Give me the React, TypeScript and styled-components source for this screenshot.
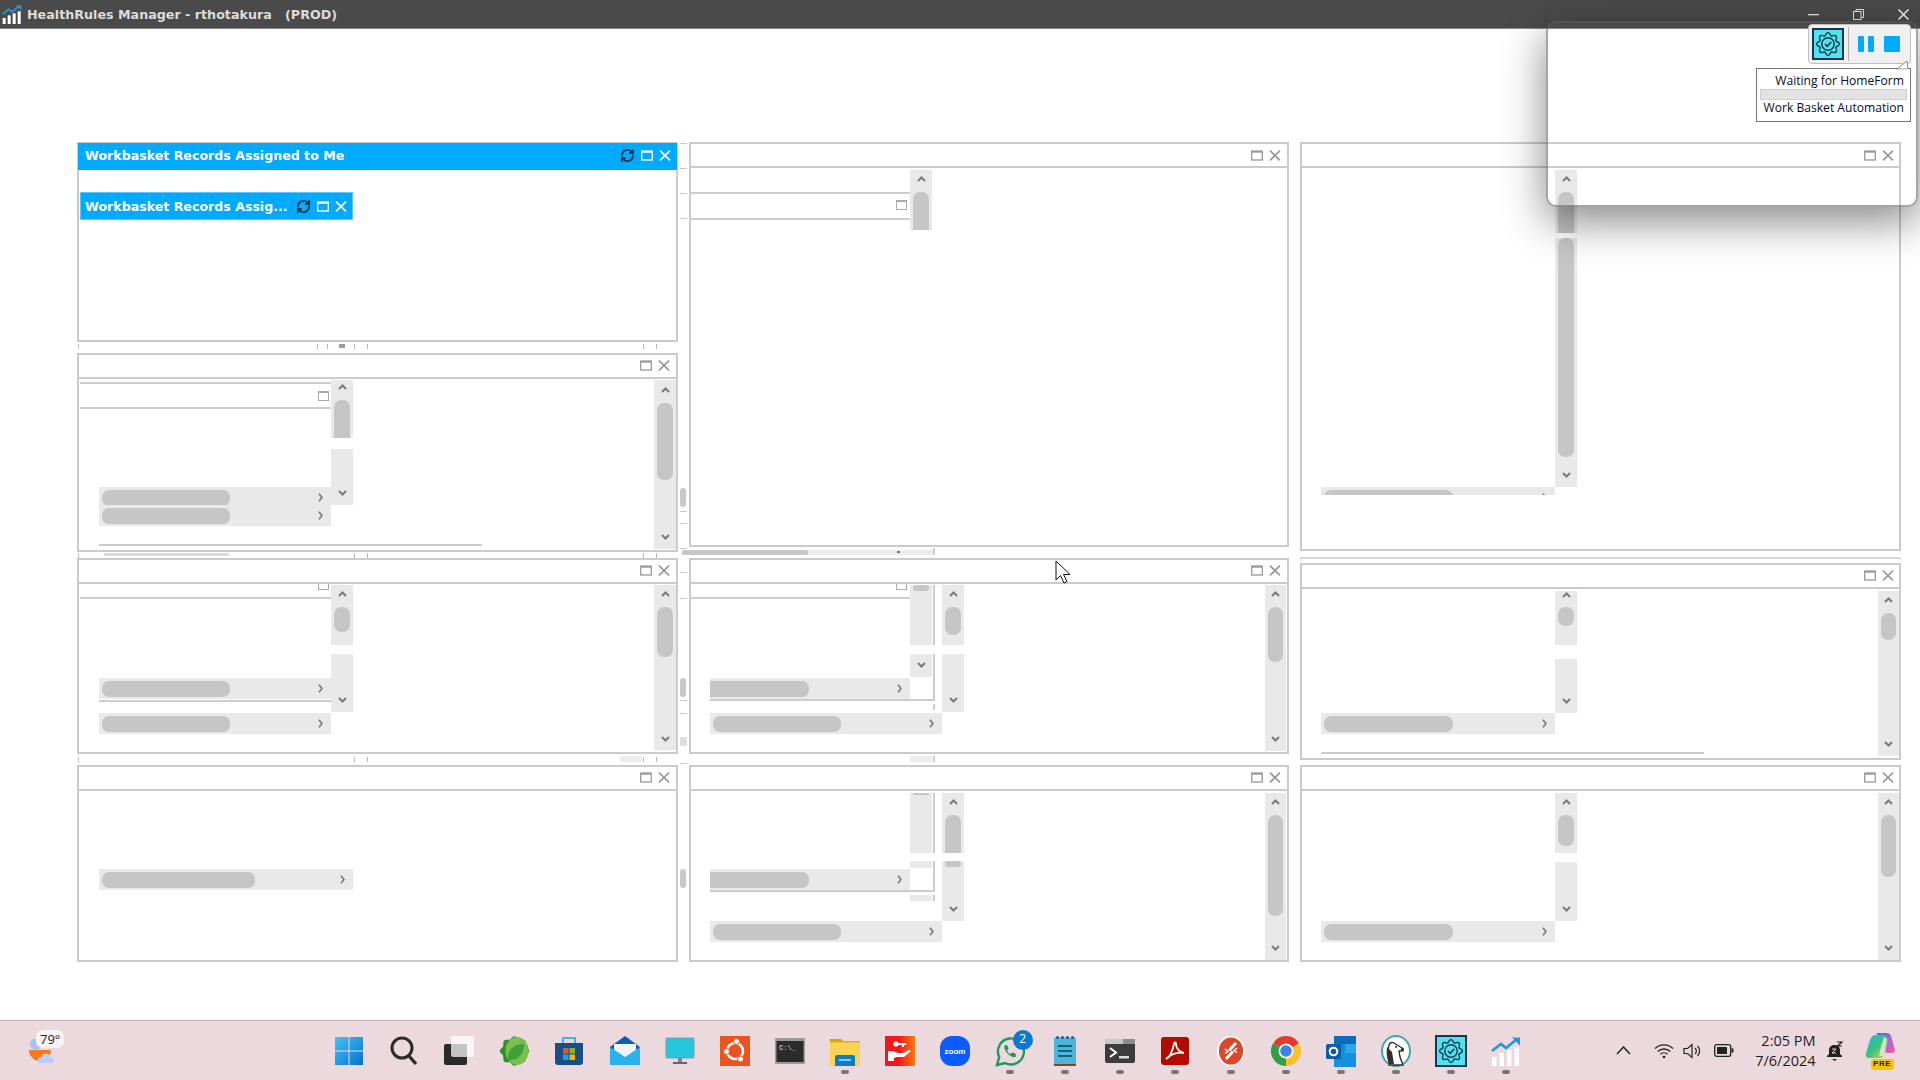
import { ReactNode } from "react";
import styled, { createGlobalStyle } from "styled-components";
import { RefreshCw } from "lucide-react";

const GlobalStyle = createGlobalStyle`
    html, body {
        margin: 0;
        height: 100%;
        overflow: hidden;
        background: #fff;
        font-family: "Open Sans", "Liberation Sans", sans-serif;
    }
`;

const Screen = styled.div`
    position: relative;
    display: flex;
    flex-direction: column;
    width: 1920px;
    height: 1080px;
    overflow: hidden;
    background: #fff;
`;

/* title bar */
const TitleBar = styled.div`
    display: flex;
    align-items: center;
    flex: 0 0 29px;
    box-sizing: border-box;
    padding: 0 11px 0 2px;
    gap: 5px;
    background: #4a4a4a;
    border-bottom: 1px solid #8a8a8a;
`;

const AppTitle = styled.span`
    flex: 1;
    padding-top: 1px;
    color: #dcdcdc;
    font: 700 12.7px "DejaVu Sans", sans-serif;
    white-space: pre;
`;

const WinControls = styled.div`
    display: flex;
    align-items: center;
    gap: 34px;
    margin-top: 1px;
`;

/* MDI area */
const Desktop = styled.div`
    flex: 1;
    display: flex;
    gap: 11px;
    padding: 113px 0 0 77px;
`;

const Column = styled.div`
    display: flex;
    flex-direction: column;
`;

const Win = styled.div<{ $w: number; $h: number; $mt: number }>`
    position: relative;
    box-sizing: border-box;
    width: ${(p) => p.$w}px;
    height: ${(p) => p.$h}px;
    margin-top: ${(p) => p.$mt}px;
    border: 2px solid #cbcbcb;
`;

const WinHeader = styled.div<{ $active?: boolean; $h: number; $low?: boolean; $pr: number }>`
    display: flex;
    align-items: center;
    justify-content: space-between;
    box-sizing: border-box;
    height: ${(p) => p.$h}px;
    padding: ${(p) => (p.$low ? 2 : 0)}px ${(p) => p.$pr}px 2px 7px;
    background: ${(p) => (p.$active ? "#00aaff" : "#fff")};
    border-bottom: ${(p) => (p.$active ? "none" : "2px solid #cbcbcb")};
    margin: ${(p) => (p.$active ? "-1px -1px 0" : "0")};
`;

const WinTitle = styled.span`
    color: #fff;
    font: 700 12.6px "DejaVu Sans", sans-serif;
    white-space: nowrap;
`;

const HeaderIcons = styled.div`
    display: flex;
    align-items: center;
    gap: 6px;
`;

const MiniTile = styled.div`
    position: absolute;
    left: 1px;
    top: 48px;
    display: flex;
    align-items: center;
    justify-content: space-between;
    box-sizing: border-box;
    width: 273px;
    height: 28px;
    padding: 0 5px 0 4px;
    background: #00aaff;
    border: 1px solid #5cc8ff;
`;

/* ghost scrollbars left behind inside the tiles */
const VTrack = styled.div<{ $x: number; $y: number; $h: number; $w: number }>`
    position: absolute;
    left: ${(p) => p.$x}px;
    top: ${(p) => p.$y}px;
    width: ${(p) => p.$w}px;
    height: ${(p) => p.$h}px;
    background: #e9e9e9;
`;

const VThumb = styled.div<{ $y: number; $h: number; $flat?: boolean }>`
    position: absolute;
    left: 3px;
    right: 3px;
    top: ${(p) => p.$y}px;
    height: ${(p) => p.$h}px;
    background: #c6c6c6;
    border-radius: ${(p) => (p.$flat ? "7px 7px 0 0" : "7px")};
`;

const ArrowSlot = styled.div<{ $y: number }>`
    position: absolute;
    left: 0;
    right: 0;
    top: ${(p) => p.$y}px;
    display: flex;
    justify-content: center;
`;

const HTrack = styled.div<{ $x: number; $y: number; $w: number; $h: number }>`
    position: absolute;
    left: ${(p) => p.$x}px;
    top: ${(p) => p.$y}px;
    width: ${(p) => p.$w}px;
    height: ${(p) => p.$h}px;
    overflow: hidden;
    background: #e9e9e9;
    display: flex;
    align-items: flex-start;
    justify-content: flex-end;
    padding: 6px 8px 0 0;
    box-sizing: border-box;
`;

const HThumb = styled.div<{ $w: number; $cut?: boolean }>`
    position: absolute;
    left: ${(p) => (p.$cut ? -10 : 3)}px;
    top: 3px;
    height: 16px;
    width: ${(p) => p.$w}px;
    background: #c6c6c6;
    border-radius: 7px;
`;

const HLine = styled.div<{ $x: number; $y: number; $w: number; $c?: string }>`
    position: absolute;
    left: ${(p) => p.$x}px;
    top: ${(p) => p.$y}px;
    width: ${(p) => p.$w}px;
    height: 2px;
    background: ${(p) => p.$c || "#cdcdcd"};
`;

const VLine = styled.div<{ $x: number; $y: number; $h: number }>`
    position: absolute;
    left: ${(p) => p.$x}px;
    top: ${(p) => p.$y}px;
    width: 2px;
    height: ${(p) => p.$h}px;
    background: #cdcdcd;
`;

const InnerBox = styled.div<{ $x: number; $y: number; $h: number; $open?: boolean }>`
    position: absolute;
    left: ${(p) => p.$x}px;
    top: ${(p) => p.$y}px;
    width: 11px;
    height: ${(p) => p.$h}px;
    box-sizing: border-box;
    border: 1px solid #aaa;
    border-top: ${(p) => (p.$open ? "none" : "2px solid #aaa")};
`;

/* marks in the gutters */
const Mark = styled.div<{ $x: number; $y: number; $w: number; $h: number; $c: string; $r?: number }>`
    position: absolute;
    left: ${(p) => p.$x}px;
    top: ${(p) => p.$y}px;
    width: ${(p) => p.$w}px;
    height: ${(p) => p.$h}px;
    background: ${(p) => p.$c};
    border-radius: ${(p) => p.$r || 0}px;
`;

const CursorWrap = styled.div`
    position: absolute;
    left: 1055px;
    top: 560px;
    line-height: 0;
`;

/* floating automation popup */
const Popup = styled.div`
    position: absolute;
    left: 1546px;
    top: 21px;
    width: 372px;
    height: 186px;
    box-sizing: border-box;
    border: 2px solid rgba(90, 90, 90, 0.55);
    border-radius: 10px;
    box-shadow: 0 14px 44px rgba(0, 0, 0, 0.48);
`;

const ToolStrip = styled.div`
    position: absolute;
    right: 5px;
    top: 1px;
    display: flex;
    align-items: center;
    box-sizing: border-box;
    width: 103px;
    height: 40px;
    padding: 0 10px 0 3px;
    background: #f0f0f0;
    border: 1px solid #c0c0c0;
    border-radius: 4px;
`;

const CogTile = styled.div`
    display: flex;
    align-items: center;
    justify-content: center;
    flex: none;
    box-sizing: border-box;
    width: 32px;
    height: 32px;
    background: #4fe3ee;
    border: 2px solid #17364f;
`;

const StripSep = styled.div`
    width: 1px;
    height: 34px;
    margin: 0 9px 0 4px;
    background: #b0b0b0;
`;

const PauseBar = styled.div`
    width: 6px;
    height: 16px;
    margin-right: 4px;
    background: #00aaff;
    border-radius: 1px;
`;

const StopBlock = styled.div`
    width: 16px;
    height: 16px;
    margin-left: 6px;
    background: #00aaff;
    border-radius: 1px;
`;

const StatusBox = styled.div`
    position: absolute;
    right: 5px;
    top: 45px;
    box-sizing: border-box;
    width: 155px;
    height: 54px;
    padding: 3px 6px 0 3px;
    background: #fff;
    border: 1px solid #777;
    text-align: right;
    color: #0a0a2a;
    font: 12.1px "Open Sans", sans-serif;
    line-height: 18px;
`;

const StatusBar = styled.div`
    box-sizing: border-box;
    width: 147px;
    height: 11px;
    margin: -1px 0;
    background: #e3e3e3;
    border: 1px solid #cfcfcf;
`;

const StripTail = styled.svg`
    position: absolute;
    right: 6px;
    top: 38px;
`;

/* taskbar */
const Taskbar = styled.div`
    display: flex;
    align-items: center;
    flex: 0 0 60px;
    box-sizing: border-box;
    background: #ecd9dd;
    border-top: 1px solid #c4b4b8;
`;

const Weather = styled.div`
    position: relative;
    flex: 0 0 321.5px;
    height: 100%;
`;

const WeatherBubble = styled.span`
    position: absolute;
    left: 36px;
    top: 9px;
    padding: 0 4px;
    height: 18px;
    line-height: 18px;
    background: #fbf4f5;
    border-radius: 7px;
    color: #222;
    font: 13px "Open Sans", sans-serif;
`;

const WeatherIcon = styled.svg`
    position: absolute;
    left: 26px;
    top: 18px;
`;

const AppRow = styled.div`
    display: flex;
    align-items: center;
    height: 100%;
`;

const AppCell = styled.div`
    position: relative;
    display: flex;
    align-items: center;
    justify-content: center;
    width: 55.1px;
    height: 100%;
`;

const RunDot = styled.div`
    position: absolute;
    left: 50%;
    bottom: 6px;
    width: 8px;
    height: 4px;
    margin-left: -4px;
    background: #777;
    border-radius: 2px;
`;

const Badge = styled.span`
    position: absolute;
    left: 30px;
    top: 9px;
    width: 20px;
    height: 20px;
    line-height: 20px;
    text-align: center;
    background: #0a7ad1;
    border-radius: 50%;
    color: #fff;
    font: 12px "Open Sans", sans-serif;
`;

const Tray = styled.div`
    display: flex;
    align-items: center;
    margin-left: 80px;
    height: 100%;
`;

const TrayIcon = styled.div<{ $w: number; $ml?: number }>`
    display: flex;
    justify-content: center;
    width: ${(p) => p.$w}px;
    margin-left: ${(p) => p.$ml || 0}px;
`;

const Clock = styled.div`
    width: 80px;
    text-align: right;
    color: #1d1d1d;
    font: 14.5px "Open Sans", sans-serif;
    line-height: 20px;
`;

const CopilotWrap = styled.div`
    position: relative;
    width: 34px;
    height: 38px;
    margin-left: 21px;
`;

const PreTag = styled.span`
    position: absolute;
    left: 6px;
    bottom: 0;
    width: 23px;
    height: 11px;
    line-height: 11px;
    text-align: center;
    background: #f7c600;
    border-radius: 3px;
    color: #222;
    font: 700 8px "Liberation Sans", sans-serif;
    letter-spacing: 0.5px;
`;

const SmallCodeText = styled.text`
    font: 700 7px "Liberation Mono", monospace;
`;

const ZoomLabel = styled.text`
    font: 700 8px "Liberation Sans", sans-serif;
`;

/* small drawn glyphs */
const MaxIcon = ({ color = "#999" }: { color?: string }) => (
    <svg width="12" height="11" viewBox="0 0 12 11">
        <rect x="0.7" y="1.2" width="10.6" height="8.8" fill="none" stroke={color} strokeWidth="1.3" />
        <rect x="0.7" y="0.7" width="10.6" height="2" fill={color} />
    </svg>
);

const CloseIcon = ({ color = "#999" }: { color?: string }) => (
    <svg width="12" height="11" viewBox="0 0 12 11">
        <path d="M1 0.7L11 10.3M11 0.7L1 10.3" stroke={color} strokeWidth="1.7" fill="none" />
    </svg>
);

const ArrowUp = () => (
    <svg width="9" height="6" viewBox="0 0 9 6">
        <path d="M1 5L4.5 1.5L8 5" stroke="#7a7a7a" strokeWidth="2" fill="none" />
    </svg>
);

const ArrowDown = () => (
    <svg width="9" height="6" viewBox="0 0 9 6">
        <path d="M1 1L4.5 4.5L8 1" stroke="#7a7a7a" strokeWidth="2" fill="none" />
    </svg>
);

const ArrowRight = () => (
    <svg width="5" height="9" viewBox="0 0 5 9">
        <path d="M1 0.8L4 4.5L1 8.2" stroke="#7a7a7a" strokeWidth="1.7" fill="none" />
    </svg>
);

const gearPath = (cx: number, cy: number, r: number, amp: number) => {
    const pts: string[] = [];
    for (let i = 0; i < 96; i++) {
        const t = (i / 96) * Math.PI * 2;
        const rad = r + amp * Math.cos(t * 8);
        pts.push(`${(cx + rad * Math.sin(t)).toFixed(2)} ${(cy - rad * Math.cos(t)).toFixed(2)}`);
    }
    return `M${pts.join("L")}Z`;
};

const GearCheck = ({ size }: { size: number }) => (
    <svg width={size} height={size} viewBox="0 0 30 30" fill="none" stroke="#17364f" strokeWidth="1.6">
        <path d={gearPath(15, 15, 11.6, 1.6)} />
        <circle cx="15" cy="15" r="7.2" />
        <path d="M11.6 15l2.5 2.6 4.6-5" strokeWidth="1.8" />
    </svg>
);

const ChartIcon = ({ size }: { size: number }) => (
    <svg width={size} height={size} viewBox="0 0 30 30">
        <path d="M1 15L10 8L15 12L26 3" stroke="#1f9ad6" strokeWidth="2.6" fill="none" />
        <path d="M21 1.5H29V9.5Z" fill="#1f9ad6" />
        <rect x="1" y="21" width="4.5" height="9" fill="#fff" />
        <rect x="8.5" y="17" width="4.5" height="13" fill="#fff" />
        <rect x="16" y="14" width="4.5" height="16" fill="#fff" />
        <rect x="23.5" y="11" width="4.5" height="19" fill="#fff" />
    </svg>
);

/* tile data, in screen coordinates */
type VBar = {
    x: number;
    top: number;
    bottom: number;
    thumb?: [number, number];
    up?: number;
    down?: number;
    flat?: boolean;
};
type HBar = { left: number; right: number; top: number; bottom: number; thumbEnd: number; cut?: boolean };
type Line = { x: number; y: number; w: number };
type VL = { x: number; y: number; h: number };
type Tile = {
    w: number;
    x: number;
    y: number;
    h: number;
    mt: number;
    v?: VBar[];
    hb?: HBar[];
    lines?: Line[];
    vlines?: VL[];
    box?: { x: number; y: number; h: number; open?: boolean };
    active?: boolean;
};

const columns: Tile[][] = [
    [
        { x: 77, y: 142, w: 601, h: 200, mt: 0, active: true },
        {
            x: 77,
            y: 353,
            w: 601,
            h: 199,
            mt: 11,
            v: [
                { x: 654, top: 380, bottom: 549, thumb: [403, 480], up: 387, down: 534 },
                { x: 331, top: 380, bottom: 438, thumb: [400, 438], up: 384, flat: true },
                { x: 331, top: 449, bottom: 505, down: 490 },
            ],
            hb: [
                { left: 99, right: 331, top: 487, bottom: 505, thumbEnd: 230 },
                { left: 99, right: 331, top: 505, bottom: 526, thumbEnd: 230 },
            ],
            lines: [
                { x: 80, y: 382, w: 251 },
                { x: 80, y: 407, w: 251 },
                { x: 99, y: 544, w: 383 },
            ],
            box: { x: 318, y: 391, h: 10 },
        },
        {
            x: 77,
            y: 558,
            w: 601,
            h: 196,
            mt: 6,
            v: [
                { x: 654, top: 585, bottom: 750, thumb: [607, 657], up: 591, down: 736 },
                { x: 331, top: 585, bottom: 645, thumb: [607, 632], up: 591 },
                { x: 331, top: 654, bottom: 712, down: 697 },
            ],
            hb: [
                { left: 99, right: 331, top: 678, bottom: 699, thumbEnd: 230 },
                { left: 99, right: 331, top: 713, bottom: 734, thumbEnd: 230 },
            ],
            lines: [
                { x: 80, y: 597, w: 251 },
                { x: 99, y: 700, w: 232 },
            ],
            box: { x: 318, y: 584, h: 6, open: true },
        },
        {
            x: 77,
            y: 765,
            w: 601,
            h: 197,
            mt: 11,
            hb: [{ left: 99, right: 353, top: 869, bottom: 890, thumbEnd: 255 }],
        },
    ],
    [
        {
            x: 689,
            y: 142,
            w: 600,
            h: 405,
            mt: 0,
            v: [{ x: 910, top: 170, bottom: 230, thumb: [192, 230], up: 176, flat: true }],
            lines: [
                { x: 691, y: 192, w: 219 },
                { x: 691, y: 218, w: 219 },
            ],
            box: { x: 896, y: 200, h: 10 },
        },
        {
            x: 689,
            y: 558,
            w: 600,
            h: 196,
            mt: 11,
            v: [
                { x: 1265, top: 585, bottom: 751, thumb: [607, 662], up: 591, down: 736 },
                { x: 942, top: 585, bottom: 645, thumb: [607, 635], up: 591 },
                { x: 942, top: 654, bottom: 712, down: 697 },
                { x: 910, top: 585, bottom: 645, thumb: [579, 591] },
                { x: 910, top: 654, bottom: 677, down: 662 },
            ],
            hb: [
                { left: 710, right: 910, top: 678, bottom: 699, thumbEnd: 809, cut: true },
                { left: 710, right: 942, top: 713, bottom: 734, thumbEnd: 841 },
            ],
            lines: [
                { x: 691, y: 597, w: 219 },
                { x: 710, y: 699, w: 225 },
            ],
            vlines: [
                { x: 933, y: 585, h: 60 },
                { x: 933, y: 654, h: 46 },
                { x: 933, y: 704, h: 6 },
            ],
            box: { x: 896, y: 584, h: 6, open: true },
        },
        {
            x: 689,
            y: 765,
            w: 600,
            h: 197,
            mt: 11,
            v: [
                { x: 1265, top: 793, bottom: 960, thumb: [815, 916], up: 799, down: 945 },
                { x: 942, top: 793, bottom: 853, thumb: [815, 853], up: 799, flat: true },
                { x: 942, top: 861, bottom: 921, thumb: [855, 867], down: 906 },
                { x: 910, top: 793, bottom: 853, thumb: [787, 795] },
                { x: 910, top: 861, bottom: 868 },
                { x: 910, top: 895, bottom: 901 },
            ],
            hb: [
                { left: 710, right: 910, top: 869, bottom: 890, thumbEnd: 809, cut: true },
                { left: 710, right: 942, top: 921, bottom: 942, thumbEnd: 841 },
            ],
            lines: [{ x: 710, y: 890, w: 225 }],
            vlines: [
                { x: 933, y: 793, h: 60 },
                { x: 933, y: 861, h: 30 },
                { x: 933, y: 895, h: 6 },
            ],
        },
    ],
    [
        {
            x: 1300,
            y: 142,
            w: 601,
            h: 409,
            mt: 0,
            v: [
                { x: 1555, top: 170, bottom: 233, thumb: [192, 233], up: 176, flat: true },
                { x: 1555, top: 238, bottom: 487, thumb: [238, 457], down: 472 },
            ],
            hb: [{ left: 1321, right: 1555, top: 487, bottom: 495, thumbEnd: 1453 }],
        },
        {
            x: 1300,
            y: 563,
            w: 601,
            h: 197,
            mt: 12,
            v: [
                { x: 1878, top: 591, bottom: 756, thumb: [613, 640], up: 597, down: 741 },
                { x: 1555, top: 591, bottom: 645, thumb: [607, 626], up: 592 },
                { x: 1555, top: 659, bottom: 713, down: 698 },
            ],
            hb: [{ left: 1321, right: 1555, top: 713, bottom: 734, thumbEnd: 1453 }],
            lines: [{ x: 1321, y: 752, w: 383 }],
        },
        {
            x: 1300,
            y: 765,
            w: 601,
            h: 197,
            mt: 5,
            v: [
                { x: 1878, top: 793, bottom: 960, thumb: [815, 877], up: 799, down: 945 },
                { x: 1555, top: 793, bottom: 853, thumb: [815, 846], up: 799 },
                { x: 1555, top: 862, bottom: 921, down: 906 },
            ],
            hb: [{ left: 1321, right: 1555, top: 921, bottom: 942, thumbEnd: 1453 }],
        },
    ],
];

const tickXs = [354, 367, 643, 656];
const gutterDashes = [143, 168, 193, 218, 511, 523, 548, 572, 598, 700, 713, 763];
const gutterBlobs = [488, 678, 869];

const TileView = ({ tile }: { tile: Tile }) => {
    const ox = tile.x + 2;
    const oy = tile.y + 2;
    return (
        <Win $w={tile.w} $h={tile.h} $mt={tile.mt}>
            <WinHeader
                $active={tile.active}
                $h={tile.active ? 27 : 24}
                $low={!tile.active && tile.y === 142}
                $pr={tile.x === 1300 ? 5 : 6}
            >
                {tile.active ? <WinTitle>Workbasket Records Assigned to Me</WinTitle> : <span />}
                <HeaderIcons>
                    {tile.active && <RefreshCw size={15} color="#24384a" strokeWidth={3} />}
                    <MaxIcon color={tile.active ? "#fff" : "#999"} />
                    <CloseIcon color={tile.active ? "#fff" : "#999"} />
                </HeaderIcons>
            </WinHeader>
            {tile.active && (
                <MiniTile>
                    <WinTitle>Workbasket Records Assig...</WinTitle>
                    <HeaderIcons>
                        <RefreshCw size={15} color="#24384a" strokeWidth={3} />
                        <MaxIcon color="#fff" />
                        <CloseIcon color="#fff" />
                    </HeaderIcons>
                </MiniTile>
            )}
            {tile.lines?.map((l) => (
                <HLine key={`${l.x}-${l.y}`} $x={l.x - ox} $y={l.y - oy} $w={l.w} />
            ))}
            {tile.vlines?.map((l) => (
                <VLine key={`${l.x}-${l.y}`} $x={l.x - ox} $y={l.y - oy} $h={l.h} />
            ))}
            {tile.box && (
                <InnerBox
                    $x={tile.box.x - ox}
                    $y={tile.box.y - oy}
                    $h={tile.box.h}
                    $open={tile.box.open}
                />
            )}
            {tile.hb?.map((b) => (
                <HTrack
                    key={`${b.left}-${b.top}`}
                    $x={b.left - ox}
                    $y={b.top - oy}
                    $w={b.right - b.left}
                    $h={b.bottom - b.top}
                >
                    <HThumb $w={b.thumbEnd - b.left + (b.cut ? 10 : -3)} $cut={b.cut} />
                    <ArrowRight />
                </HTrack>
            ))}
            {tile.v?.map((b) => (
                <VTrack
                    key={`${b.x}-${b.top}`}
                    $x={b.x - ox}
                    $y={b.top - oy}
                    $w={b.x > 1000 && b.x !== 1555 ? 21 : 22}
                    $h={b.bottom - b.top}
                >
                    {b.thumb && (
                        <VThumb
                            $y={Math.max(b.thumb[0] - b.top, 0)}
                            $h={b.thumb[1] - Math.max(b.thumb[0], b.top)}
                            $flat={b.flat}
                        />
                    )}
                    {b.up !== undefined && (
                        <ArrowSlot $y={b.up - b.top}>
                            <ArrowUp />
                        </ArrowSlot>
                    )}
                    {b.down !== undefined && (
                        <ArrowSlot $y={b.down - b.top}>
                            <ArrowDown />
                        </ArrowSlot>
                    )}
                </VTrack>
            ))}
        </Win>
    );
};

/* taskbar icons */
const WindowsIcon = () => (
    <svg width="30" height="30" viewBox="0 0 30 30">
        <defs>
            <linearGradient id="wn" x1="0" y1="0" x2="1" y2="1">
                <stop offset="0" stopColor="#45c3f5" />
                <stop offset="1" stopColor="#0670cf" />
            </linearGradient>
        </defs>
        <path d="M1 1h13.5v13.5H1zM15.5 1H29v13.5H15.5zM1 15.5h13.5V29H1zM15.5 15.5H29V29H15.5z" fill="url(#wn)" />
    </svg>
);

const SearchIcon = () => (
    <svg width="30" height="30" viewBox="0 0 30 30" fill="none" stroke="#2b2b2b" strokeWidth="3">
        <circle cx="13" cy="12" r="10" />
        <path d="M20 20l7 8" strokeWidth="3.4" />
    </svg>
);

const TaskViewIcon = () => (
    <svg width="30" height="30" viewBox="0 0 30 30">
        <rect x="0" y="8" width="23" height="21" rx="2" fill="#2a2a2a" />
        <rect x="7" y="0" width="23" height="21" rx="2" fill="#fff" fillOpacity="0.72" />
    </svg>
);

const SpringIcon = () => (
    <svg width="30" height="30" viewBox="0 0 30 30">
        <path d={gearPath(15.5, 15, 13.5, 1.2)} fill="#2f8f2f" />
        <ellipse cx="18" cy="15" rx="11.5" ry="14" fill="#79bf4c" />
        <path d="M9 24C8 14 15 8 25 8C25 18 19 25 9 24Z" fill="#3f9f38" />
    </svg>
);

const StoreIcon = () => (
    <svg width="30" height="30" viewBox="0 0 30 30">
        <path d="M9 7V2h12v5" fill="none" stroke="#37b6f0" strokeWidth="2" />
        <path d="M1 7h28v19a3 3 0 0 1-3 3H4a3 3 0 0 1-3-3z" fill="#174f86" />
        <rect x="9" y="12" width="5.5" height="5.5" fill="#e8542a" />
        <rect x="15.5" y="12" width="5.5" height="5.5" fill="#7eb62c" />
        <rect x="9" y="18.5" width="5.5" height="5.5" fill="#1ba1e8" />
        <rect x="15.5" y="18.5" width="5.5" height="5.5" fill="#f7b500" />
    </svg>
);

const MailIcon = () => (
    <svg width="30" height="30" viewBox="0 0 30 30">
        <path d="M0 11L15 0L30 11V29H0Z" fill="#0f5fae" />
        <path d="M4 8h22v9l-11 7-11-7z" fill="#f2f2f2" />
        <path d="M0 11L15 21L30 11V29H0Z" fill="#28b3ec" />
    </svg>
);

const MonitorIcon = () => (
    <svg width="30" height="30" viewBox="0 0 30 30">
        <rect x="1" y="2" width="28" height="20" rx="1" fill="#24c6dc" stroke="#8a9aa8" />
        <rect x="13" y="22" width="4" height="4" fill="#7a8a96" />
        <rect x="8" y="26" width="14" height="2" fill="#5a6a76" />
    </svg>
);

const UbuntuIcon = () => (
    <svg width="30" height="30" viewBox="0 0 30 30">
        <rect width="30" height="30" fill="#e95420" />
        <circle cx="15" cy="15" r="8" fill="none" stroke="#fff" strokeWidth="2.6" />
        <circle cx="16.5" cy="5.5" r="3" fill="#fff" stroke="#e95420" />
        <circle cx="6.5" cy="15.5" r="3" fill="#fff" stroke="#e95420" />
        <circle cx="20.5" cy="23" r="3" fill="#fff" stroke="#e95420" />
    </svg>
);

const CmdIcon = () => (
    <svg width="30" height="26" viewBox="0 0 30 26">
        <rect width="30" height="26" rx="1" fill="#9a9a9a" />
        <rect x="1.5" y="3" width="27" height="21" fill="#2b2b2b" />
        <SmallCodeText x="4" y="12" fill="#bbb">
            C:\_
        </SmallCodeText>
    </svg>
);

const FolderIcon = () => (
    <svg width="30" height="30" viewBox="0 0 30 30">
        <path d="M0 3h11l3 3h16v4H0z" fill="#d9a00e" />
        <rect y="5" width="30" height="25" fill="#f7d453" />
        <rect y="5" width="30" height="1.4" fill="#e3a70f" />
        <path d="M5 21a2 2 0 0 1 2-2h16a2 2 0 0 1 2 2v9H5z" fill="#0e7cc4" />
        <rect x="9" y="23" width="12" height="2" fill="#7fd0f5" />
    </svg>
);

const HandIcon = () => (
    <svg width="30" height="30" viewBox="0 0 30 30">
        <defs>
            <linearGradient id="hd" x1="0" y1="0" x2="1" y2="0">
                <stop offset="0.45" stopColor="#f5161c" />
                <stop offset="1" stopColor="#fb7b08" />
            </linearGradient>
        </defs>
        <rect width="30" height="30" fill="url(#hd)" />
        <circle cx="11" cy="8" r="2.6" fill="#fff" />
        <path d="M12 7h9v2h-2v2h-2V9h-5z" fill="#fff" />
        <path d="M3 15h5l5 2h5l6-3 2 1-7 6H12l-3 1v3H3z" fill="#fff" />
    </svg>
);

const ZoomIcon = () => (
    <svg width="30" height="30" viewBox="0 0 30 30">
        <rect width="30" height="30" rx="12" fill="#0b5cff" />
        <ZoomLabel x="15" y="18" fill="#fff" textAnchor="middle">
            zoom
        </ZoomLabel>
    </svg>
);

const WhatsappIcon = () => (
    <svg width="30" height="32" viewBox="0 0 30 32">
        <path d="M2 30l2.2-8A13 13 0 1 1 10 28z" fill="none" stroke="#1c9a5c" strokeWidth="2.4" />
        <path
            d="M10 10c-1.5 2 0 6 3 9s6 4 8 2.5l-.5-3-3.500-1-1.500 1.500c-1.500-.5-3-2-3.500-3.500l1.500-1.500-1-3.500z"
            fill="#1c9a5c"
        />
    </svg>
);

const NotepadIcon = () => (
    <svg width="22" height="30" viewBox="0 0 22 30">
        <rect y="1.5" width="22" height="28.5" rx="1" fill="#4db6d8" />
        <rect y="28" width="22" height="2" fill="#7a4a1c" />
        <g fill="#17607e">
            <circle cx="3.5" cy="1.5" r="1.5" />
            <circle cx="8.5" cy="1.5" r="1.5" />
            <circle cx="13.5" cy="1.5" r="1.5" />
            <circle cx="18.5" cy="1.5" r="1.5" />
            <rect x="4" y="9" width="14" height="2" />
            <rect x="4" y="14" width="14" height="2" />
            <rect x="4" y="19" width="14" height="2" />
        </g>
    </svg>
);

const TerminalIcon = () => (
    <svg width="30" height="24" viewBox="0 0 30 24">
        <rect width="30" height="24" rx="2" fill="#3c3c3c" />
        <rect width="18" height="5" fill="#c8c8c8" />
        <rect x="18" width="12" height="5" fill="#8c8c8c" />
        <path d="M5 9l6 4.500-6 4.500" stroke="#fff" strokeWidth="2" fill="none" />
        <rect x="14" y="17" width="10" height="2.500" fill="#ddd" />
    </svg>
);

const AcrobatIcon = () => (
    <svg width="28" height="28" viewBox="0 0 28 28">
        <rect width="28" height="28" rx="3" fill="#b30b00" />
        <path
            d="M5 22c3-1 6-6 8-15 .5-2 2-2 2 0 0 4 3 8 8 9-6-1-12 0-18 6z"
            fill="none"
            stroke="#fff"
            strokeWidth="1.8"
        />
    </svg>
);

const RemoteIcon = () => (
    <svg width="28" height="30" viewBox="0 0 28 30">
        <ellipse cx="14" cy="15" rx="13" ry="14.5" fill="#d9482a" stroke="#fff" strokeWidth="1.8" />
        <path d="M19 7l-7 7.500M9 23l7-7.500" stroke="#fff" strokeWidth="2.8" fill="none" />
        <path d="M8 13l3 2.500-3 2M20 12l-3 2.500 3 2" stroke="#fff" strokeWidth="1.400" fill="none" />
    </svg>
);

const ChromeIcon = () => (
    <svg width="30" height="30" viewBox="0 0 30 30">
        <path d="M15 15L2 7.500A15 15 0 0 1 28 7.500Z" fill="#e33b2e" />
        <path d="M15 15L28 7.500A15 15 0 0 1 15 30Z" fill="#fbc02d" />
        <path d="M15 15L15 30A15 15 0 0 1 2 7.500Z" fill="#2f9e44" />
        <circle cx="15" cy="15" r="7.5" fill="#fff" />
        <circle cx="15" cy="15" r="5.8" fill="#3b82e6" />
    </svg>
);

const OutlookIcon = () => (
    <svg width="30" height="32" viewBox="0 0 30 32">
        <rect x="8" y="1" width="22" height="8" fill="#0f6cbd" />
        <rect x="8" y="9" width="11" height="9" fill="#0f8ad8" />
        <rect x="19" y="9" width="11" height="9" fill="#28a8ea" />
        <path d="M8 18h22v14H8z" fill="#1490df" />
        <rect x="0" y="9" width="15" height="15" rx="1.5" fill="#0a5ea8" />
        <circle cx="7.5" cy="16.5" r="3.8" fill="none" stroke="#fff" strokeWidth="2" />
    </svg>
);

const BeaverIcon = () => (
    <svg width="30" height="32" viewBox="0 0 30 32">
        <ellipse cx="15" cy="16" rx="14" ry="15" fill="#fff" stroke="#3aa9a9" strokeWidth="2" />
        <path d="M8 10c1-3 4-3 5-2l8 5c2 1 2 3 0 3l-3 0 1 6 3 8H8l1-11-2-4z" fill="#fff" stroke="#352f2b" strokeWidth="1.400" />
        <path d="M6 12c-1 6 0 12 2 17h5l-2-12z" fill="#352f2b" />
        <circle cx="15" cy="12" r="1" fill="#352f2b" />
        <circle cx="21" cy="14.500" r="1.200" fill="#352f2b" />
    </svg>
);

const AppCog = () => (
    <CogTile>
        <GearCheck size={26} />
    </CogTile>
);

const WeatherGlyph = () => (
    <WeatherIcon width="30" height="30" viewBox="0 0 30 30">
        <circle cx="10" cy="5" r="6" fill="#a9c0f2" />
        <path d="M3 11h22a11 11 0 0 1-22 0z" fill="#f47a1c" />
        <circle cx="20" cy="19" r="4.5" fill="#bccdf7" />
        <rect x="12" y="18" width="16" height="6" rx="3" fill="#bccdf7" />
    </WeatherIcon>
);

const CopilotIcon = () => (
    <svg width="32" height="30" viewBox="0 0 32 30">
        <defs>
            <linearGradient id="cpA" x1="0" y1="0" x2="1" y2="1">
                <stop offset="0" stopColor="#1fb8f0" />
                <stop offset="0.5" stopColor="#38c47a" />
                <stop offset="1" stopColor="#f0d040" />
            </linearGradient>
            <linearGradient id="cpB" x1="0" y1="0" x2="1" y2="1">
                <stop offset="0" stopColor="#2f6ff0" />
                <stop offset="0.5" stopColor="#b060e0" />
                <stop offset="1" stopColor="#f06090" />
            </linearGradient>
        </defs>
        <path d="M11 1h11c2 0 3 1 4 3l4 14c0 2-1 3-3 3h-6L15 5z" fill="url(#cpB)" />
        <path d="M9 3c-2 1-3 3-4 5L1 21c-1 3 1 5 3 5h11c2 0 3-1 4-3l3-10c1-3 2-9-3-10z" fill="url(#cpA)" />
        <path d="M16 15l3-10 3 2-3 17h-5z" fill="#f5e9ee" fillOpacity="0.75" />
    </svg>
);

const apps: { id: string; icon: ReactNode; running?: boolean; badge?: string }[] = [
    { id: "start", icon: <WindowsIcon /> },
    { id: "search", icon: <SearchIcon /> },
    { id: "taskview", icon: <TaskViewIcon /> },
    { id: "spring", icon: <SpringIcon /> },
    { id: "store", icon: <StoreIcon /> },
    { id: "mail", icon: <MailIcon /> },
    { id: "monitor", icon: <MonitorIcon /> },
    { id: "ubuntu", icon: <UbuntuIcon /> },
    { id: "cmd", icon: <CmdIcon /> },
    { id: "explorer", icon: <FolderIcon />, running: true },
    { id: "hand", icon: <HandIcon /> },
    { id: "zoom", icon: <ZoomIcon /> },
    { id: "whatsapp", icon: <WhatsappIcon />, running: true, badge: "2" },
    { id: "notepad", icon: <NotepadIcon />, running: true },
    { id: "terminal", icon: <TerminalIcon />, running: true },
    { id: "acrobat", icon: <AcrobatIcon />, running: true },
    { id: "remote", icon: <RemoteIcon />, running: true },
    { id: "chrome", icon: <ChromeIcon />, running: true },
    { id: "outlook", icon: <OutlookIcon />, running: true },
    { id: "beaver", icon: <BeaverIcon />, running: true },
    { id: "cog", icon: <AppCog />, running: true },
    { id: "chart", icon: <ChartIcon size={30} />, running: true },
];

const App = () => (
    <Screen>
        <GlobalStyle />
        <TitleBar>
            <ChartIcon size={20} />
            <AppTitle>HealthRules Manager - rthotakura{"   "}(PROD)</AppTitle>
            <WinControls>
                <svg width="11" height="11" viewBox="0 0 11 11">
                    <rect y="5" width="11" height="1.3" fill="#e6e6e6" />
                </svg>
                <svg width="11" height="11" viewBox="0 0 11 11" fill="none" stroke="#e6e6e6">
                    <rect x="0.5" y="2.5" width="7.5" height="8" />
                    <path d="M3 2.500V.5h7.500v8H8" />
                </svg>
                <svg width="11" height="11" viewBox="0 0 11 11">
                    <path d="M.5 .5L10.500 10.500M10.500 .5L.5 10.500" stroke="#f2f2f2" strokeWidth="1.500" />
                </svg>
            </WinControls>
        </TitleBar>

        <Desktop>
            {columns.map((col) => (
                <Column key={col[0].x}>
                    {col.map((tile) => (
                        <TileView key={tile.y} tile={tile} />
                    ))}
                </Column>
            ))}
        </Desktop>

        {/* paint left over between the tiles */}
        {[344, 553, 757].map((y) => (
            <Mark key={`l${y}`} $x={78} $y={y} $w={1} $h={5} $c="#c4c4c4" />
        ))}
        {[344, 553, 757].flatMap((y) =>
            tickXs.map((x) => <Mark key={`${x}-${y}`} $x={x} $y={y} $w={1} $h={5} $c="#b8b8b8" />)
        )}
        <Mark $x={317} $y={344} $w={1} $h={5} $c="#b8b8b8" />
        <Mark $x={327} $y={344} $w={1} $h={5} $c="#b8b8b8" />
        <Mark $x={339} $y={344} $w={6} $h={4} $c="#9c9c9c" />
        <Mark $x={104} $y={553} $w={125} $h={3} $c="#dcdcdc" />
        <Mark $x={620} $y={756} $w={22} $h={6} $c="#ececec" />
        <Mark $x={910} $y={756} $w={22} $h={6} $c="#ececec" />
        <Mark $x={933} $y={756} $w={2} $h={6} $c="#cdcdcd" />
        {gutterDashes.map((y) => (
            <Mark key={`g${y}`} $x={680} $y={y} $w={7} $h={1} $c="#c8c8c8" />
        ))}
        {gutterBlobs.map((y) => (
            <Mark key={`b${y}`} $x={680} $y={y} $w={6} $h={19} $c="#c9c9c9" $r={3} />
        ))}
        <Mark $x={680} $y={737} $w={7} $h={9} $c="#dedede" />
        <Mark $x={682} $y={550} $w={251} $h={5} $c="#ececec" />
        <Mark $x={682} $y={550} $w={126} $h={5} $c="#c6c6c6" $r={2} />
        <Mark $x={897} $y={551} $w={3} $h={2} $c="#777" />
        <Mark $x={933} $y={548} $w={2} $h={7} $c="#cdcdcd" />
        <Mark $x={1300} $y={557} $w={601} $h={2} $c="#d8d8d8" />
        <Mark $x={1300} $y={559} $w={1} $h={2} $c="#d8d8d8" />
        <Mark $x={1900} $y={559} $w={1} $h={2} $c="#d8d8d8" />

        <Taskbar>
            <Weather>
                <WeatherGlyph />
                <WeatherBubble>79°</WeatherBubble>
            </Weather>
            <AppRow>
                {apps.map((a) => (
                    <AppCell key={a.id}>
                        {a.icon}
                        {a.badge && <Badge>{a.badge}</Badge>}
                        {a.running && <RunDot />}
                    </AppCell>
                ))}
            </AppRow>
            <Tray>
                <TrayIcon $w={20}>
                    <svg width="15" height="9" viewBox="0 0 15 9" fill="none" stroke="#222" strokeWidth="1.5">
                        <path d="M1 8l6.500-7L14 8" />
                    </svg>
                </TrayIcon>
                <TrayIcon $w={22} $ml={19}>
                    <svg width="20" height="16" viewBox="0 0 20 16" fill="none" stroke="#222" strokeWidth="1.3">
                        <path d="M1 5.500a13 13 0 0 1 18 0M3.800 8.500a9 9 0 0 1 12.400 0M6.500 11.300a5 5 0 0 1 7 0" />
                        <circle cx="10" cy="14" r="1.3" fill="#222" stroke="none" />
                    </svg>
                </TrayIcon>
                <TrayIcon $w={22} $ml={7}>
                    <svg width="20" height="16" viewBox="0 0 20 16" fill="none" stroke="#222" strokeWidth="1.2">
                        <path d="M1 5.500h3.500L9 1.500v13l-4.500-4H1z" />
                        <path d="M12 5a4 4 0 0 1 0 6M14.500 3a7 7 0 0 1 0 10" />
                    </svg>
                </TrayIcon>
                <TrayIcon $w={24} $ml={8}>
                    <svg width="20" height="13" viewBox="0 0 20 13">
                        <rect x="0.7" y="0.7" width="16" height="11.6" rx="2" fill="none" stroke="#222" strokeWidth="1.3" />
                        <rect x="3" y="3" width="10" height="7" rx="0.5" fill="#222" />
                        <rect x="17.5" y="4.5" width="2" height="4" fill="#222" />
                    </svg>
                </TrayIcon>
                <Clock>
                    2:05 PM
                    <br />
                    7/6/2024
                </Clock>
                <TrayIcon $w={18} $ml={10}>
                    <svg width="16" height="20" viewBox="0 0 16 20">
                        <path d="M7 4a5 5 0 0 0-5 5v4l-2 2v1h15v-1l-2-2V9a5 5 0 0 0-6-5z" fill="#222" />
                        <path d="M5 18h5l-2.500 2z" fill="#222" />
                        <path d="M5 8h4L5 12h4" fill="none" stroke="#ecd9dd" strokeWidth="1" />
                        <path d="M10 1h5l-4.500 4H15" fill="none" stroke="#222" strokeWidth="1.2" />
                    </svg>
                </TrayIcon>
                <CopilotWrap>
                    <CopilotIcon />
                    <PreTag>PRE</PreTag>
                </CopilotWrap>
            </Tray>
        </Taskbar>

        <CursorWrap>
            <svg width="17" height="24" viewBox="0 0 17 24">
                <path
                    d="M1 1V20L5.500 15.500L9 23L12 21.500L8.500 14.500H15Z"
                    fill="#fff"
                    stroke="#111"
                    strokeWidth="1"
                />
            </svg>
        </CursorWrap>

        <Popup>
            <ToolStrip>
                <CogTile>
                    <GearCheck size={26} />
                </CogTile>
                <StripSep />
                <PauseBar />
                <PauseBar />
                <StopBlock />
            </ToolStrip>
            <StatusBox>
                Waiting for HomeForm
                <StatusBar />
                Work Basket Automation
            </StatusBox>
            <StripTail width="14" height="9" viewBox="0 0 14 9">
                <path d="M1 8L11 0L12 8Z" fill="#fff" stroke="#888" />
                <path d="M0 9H14" stroke="#fff" strokeWidth="1" />
            </StripTail>
        </Popup>
    </Screen>
);

export default App;
